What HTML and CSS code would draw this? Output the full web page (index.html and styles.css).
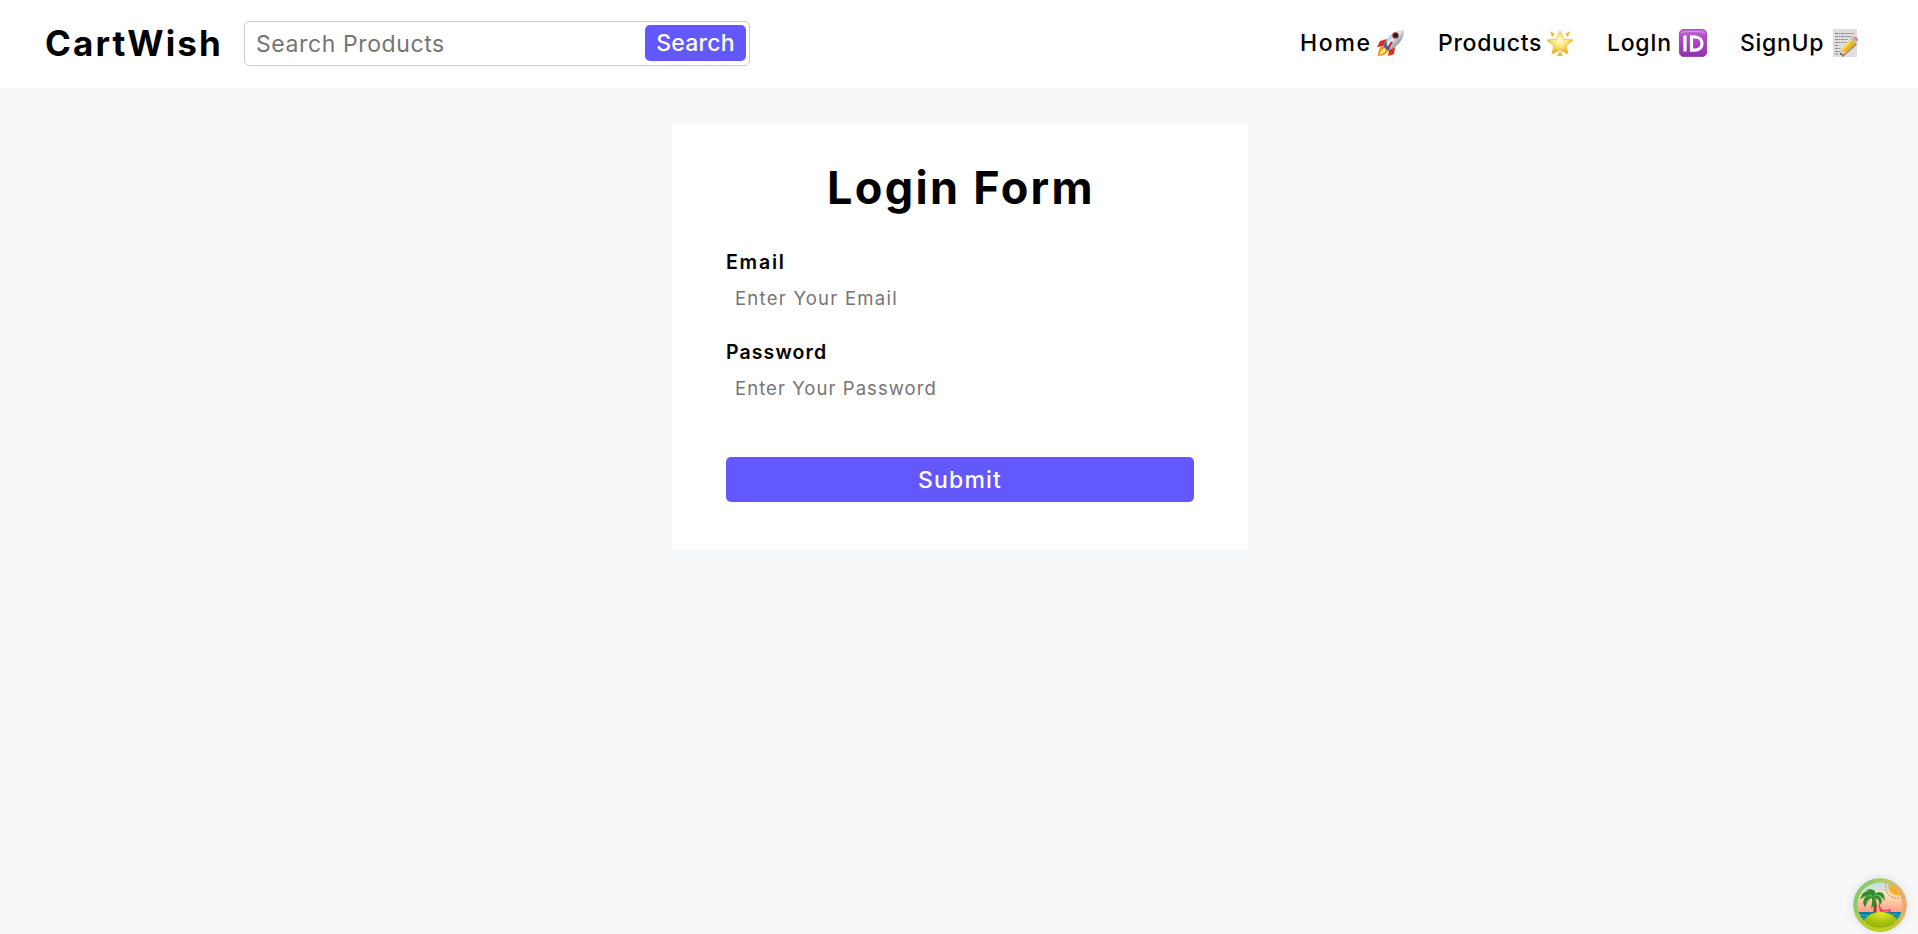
FILE: index.html
```
<!DOCTYPE html>
<html lang="en">
<head>
<meta charset="utf-8">
<title>CartWish</title>
<link rel="stylesheet" href="styles.css">
</head>
<body>
<header class="navbar">
  <div class="brand">CartWish</div>
  <form class="search">
    <input class="search-input" type="text" placeholder="Search Products">
    <button class="search-button" type="button"><span class="search-label">Search</span></button>
  </form>
  <nav class="links">
    <a class="link"><span class="label home">Home</span>
      <svg class="icon" viewBox="0 0 28 28">
        <defs><linearGradient id="hull" x1="0" y1="0" x2="1" y2="1"><stop offset=".2" stop-color="#7db4e2"/><stop offset=".45" stop-color="#e6eaf0"/><stop offset=".8" stop-color="#667382"/></linearGradient></defs>
        <path d="M10 10 3 12 0 18 7 17ZM18 18 17 25 11 27 12 21Z" fill="#dd2b16"/>
        <path d="M8 17C3 17 1 21 1 27 7 27 11 24 11 20Z" fill="#f58a19"/>
        <path d="M8 19C4 20 3 23 2 26 6 25 9 23 9 20Z" fill="#ffe45b"/>
        <path d="M27 1C19 1 14 5 10 10L6 17 11 22 18 18C24 13 27 8 27 1Z" fill="url(#hull)"/>
        <path d="M10 11 6 17 11 22 13 20C10 18 9 15 10 11Z" fill="#2e6ba4"/>
        <path d="m15 13-4 6" stroke="#c52119" stroke-width="2"/>
        <circle cx="18.500" cy="6.500" r="3.200" fill="#b51d20"/><circle cx="18.700" cy="6.300" r="1.900" fill="#221b2b"/>
      </svg></a>
    <a class="link"><span class="label products">Products</span>
      <svg class="icon" viewBox="0 0 28 28">
        <defs><radialGradient id="glow" cy=".4"><stop stop-color="#fffbd0"/><stop offset=".55" stop-color="#fbe77c"/><stop offset="1" stop-color="#eeb52c"/></radialGradient></defs>
        <path d="M4 2 9 5 6 8ZM24 2 19 5 22 8ZM14 22 17 27 11 27Z" fill="#edbc35"/>
        <path d="m14 2 3.700 8.200 9.300.8-7 6 2.200 8.200L14 20.800l-8.200 4.400L8 17 1 11l9.300-.8Z" fill="url(#glow)" stroke="#edb83a" stroke-width=".8" stroke-linejoin="round"/>
      </svg></a>
    <a class="link"><span class="label login">LogIn</span>
      <svg class="icon" viewBox="0 0 28 28">
        <defs><linearGradient id="badge" x2="0" y2="1"><stop stop-color="#c16fd4"/><stop offset=".25" stop-color="#b54bcb"/><stop offset="1" stop-color="#9030ae"/></linearGradient></defs>
        <rect x=".4" y=".4" width="27.200" height="27.200" rx="4.500" fill="url(#badge)" stroke="#892fa5" stroke-width=".8"/>
        <path d="M2 3.500C9 2 19 2 26 3.500" stroke="#d797e3" fill="none"/>
        <path d="M6 6.500V22.500M12.500 7.800V21.200H15.500C25.500 21.200 25.500 7.800 15.500 7.800Z" stroke="#fff" stroke-width="3.200" fill="none"/>
      </svg></a>
    <a class="link"><span class="label signup">SignUp</span>
      <svg class="icon" viewBox="0 0 28 28">
        <rect x="1" y="0" width="24" height="28" fill="#dedede"/>
        <path d="M3 4.500h19M3 7.500h17M3 10.500h13M3 13.500h12M3 16.500h4M3 19.500h6M3 22.500h6M3 25h4" stroke="#777" stroke-width=".8" stroke-dasharray="3 .7 1.500 .6"/>
        <path d="M10 27 24 14.500" stroke="#8d8d8d" stroke-width="3"/>
        <path d="M8 26 10 20 20 9 25 13 14 24Z" fill="#efb51d"/>
        <path d="m10 20 10-11 1.500 1.200L12 21Z" fill="#ffdc4e"/>
        <path d="M8 26 10 20 14 24Z" fill="#edcb91"/><path d="m8 26 .8-2.300 1.500 1.500Z" fill="#333"/>
        <path d="m18.800 10.300 1.700-1.800 4.600 3.900-1.700 1.800Z" fill="#aebec7"/>
        <path d="M20.500 8.500C23 6 28 9.500 25.200 12.500Z" fill="#ed858e"/>
      </svg></a>
  </nav>
</header>
<main class="page">
  <form class="card">
    <h1 class="title">Login Form</h1>
    <label class="field-label email-label" for="email">Email</label>
    <input class="field email-field" id="email" type="email" placeholder="Enter Your Email">
    <label class="field-label" for="password">Password</label>
    <input class="field" id="password" type="password" placeholder="Enter Your Password">
    <button class="submit" type="button"><span class="submit-label">Submit</span></button>
  </form>
</main>
<svg class="island" viewBox="0 0 54 54">
  <defs>
    <linearGradient id="ring" x1="0" y1=".2" x2="1" y2=".65"><stop stop-color="#76c96b"/><stop offset=".45" stop-color="#b8ca62"/><stop offset="1" stop-color="#f5a176"/></linearGradient>
    <linearGradient id="low" x2="0" y2="1"><stop offset=".55" stop-color="#b5d21b" stop-opacity="0"/><stop offset="1" stop-color="#b5d21b"/></linearGradient>
    <linearGradient id="sky" x2="0" y2="1"><stop stop-color="#9be3f7"/><stop offset=".32" stop-color="#fce1bc"/><stop offset=".65" stop-color="#ff9a80"/></linearGradient>
    <radialGradient id="sand" cy=".1"><stop stop-color="#e0e629"/><stop offset="1" stop-color="#9dbd0a"/></radialGradient>
    <clipPath id="scene"><circle cx="27" cy="27" r="22.500"/></clipPath>
  </defs>
  <circle cx="27" cy="27" r="27" fill="url(#ring)"/><circle cx="27" cy="27" r="27" fill="url(#low)"/>
  <g clip-path="url(#scene)">
    <path fill="url(#sky)" d="M0 0h54v54H0z"/>
    <circle cx="44.500" cy="8.500" r="9" fill="#ffae24"/>
    <path d="M33 5c-2 9 5 17 15 15" fill="none" stroke="#f79b35" stroke-width="1.600" stroke-dasharray="1.500 1.600"/>
    <path d="M0 34h54v9H0z" fill="#087fa0"/><path d="M3 37q3-2 6 0t6 0M39 37q3-2 6 0t6 0M3 40q3-2 6 0t6 0M39 40q3-2 6 0t6 0" stroke="#35b6c5" fill="none"/>
    <path d="M20 18q4 9 1 20" stroke="#8b431d" stroke-width="3" fill="none"/>
    <path d="M19 17C15 11 10 14 8 20q5-3 11-3C12 18 9 23 12 28q2-7 8-9 0 5-1 10 5-4 3-10 5 2 5 7 4-5-4-9 5-1 8 4 0-9-9-5 0-5-7-4 2 1 4 5Z" fill="#2f8d2d" stroke="#2f8d2d" stroke-width="1.200"/>
    <path d="m9 19 10-2-6 7m7-6 3 5m-2-6 7 1" stroke="#64bc38" fill="none"/>
    <path d="m26 27 2 7m-1-4 3 3 8-1m-9 1-1 3m8-4 1 3" stroke="#ec3977" stroke-width="1.600" fill="none"/>
    <path d="M9 48C13 29 42 29 47 48v6H9Z" fill="url(#sand)"/>
  </g>
  <path d="M13 45q13 8 28 0" fill="none" stroke="#7d9c0e" stroke-width=".8" stroke-dasharray="4 1"/>
</svg>
</body>
</html>
```
FILE: styles.css
```
* { box-sizing: border-box; }
body {
  margin: 0;
  height: 934px;
  overflow: hidden;
  background: #f6f8fa;
  color: #000;
  font-family: Inter, "Liberation Sans", sans-serif;
  font-size: 23px;
  font-weight: 500;
}
input, button { font: inherit; outline: none; }
.navbar {
  display: flex;
  align-items: center;
  height: 88px;
  padding: 0 58px 0 45px;
  background: #fff;
}
.brand {
  width: 199px;
  margin-bottom: 2px;
  font-size: 35px;
  font-weight: 700;
  letter-spacing: 2.1px;
  white-space: nowrap;
}
.search {
  display: flex;
  width: 506px;
  height: 45px;
  margin-bottom: 1px;
  padding: 3px;
  border: 1px solid #ccc;
  border-radius: 5px;
}
.search-input {
  flex: 1;
  min-width: 0;
  padding: 0 8px;
  border: 0;
  background: none;
  font-weight: 400;
  letter-spacing: 0.6px;
}
.search-button, .submit {
  padding: 0;
  border: 0;
  border-radius: 5px;
  background: #6358fb;
  color: #fff;
}
.search-button { width: 101px; height: 36px; letter-spacing: 0.2px; }
::placeholder { color: #757575; opacity: 1; }
.links { display: flex; gap: 33px; margin: 0 0 2px auto; }
.link { display: flex; align-items: center; }
.label { white-space: nowrap; font-weight: 450; letter-spacing: 0.7px; }
.home { width: 77px; letter-spacing: 1.7px; }
.products { width: 108px; }
.login { width: 72px; }
.signup { width: 92px; }
.icon { display: block; width: 28px; height: 28px; }
.page { display: flex; justify-content: center; padding-top: 36px; }
.card {
  display: flex;
  flex-direction: column;
  width: 576px;
  height: 426px;
  margin-left: 2px;
  padding: 36px 54px 48px;
  background: #fff;
}
.title {
  margin: 0 0 30px;
  padding-left: 2px;
  font-size: 45px;
  font-weight: 700;
  letter-spacing: 2.3px;
  line-height: 56px;
  text-align: center;
  white-space: nowrap;
}
.field-label {
  height: 32px;
  font-size: 19.5px;
  font-weight: 600;
  letter-spacing: 1.1px;
  line-height: 32px;
}
.email-label { letter-spacing: 1.8px; }
.field {
  height: 40px;
  margin-bottom: 18px;
  padding: 0 9px;
  border: 0;
  font-size: 18.5px;
  font-weight: 400;
  letter-spacing: 1.05px;
}
.email-field { letter-spacing: 1.25px; }
.submit { height: 45px; margin-top: 31px; letter-spacing: 1.2px; }
.island {
  position: fixed;
  right: 11px;
  bottom: 2px;
  width: 54px;
  height: 54px;
  border-radius: 50%;
  box-shadow: 0 0 10px rgba(0, 0, 0, 0.12);
}
```
